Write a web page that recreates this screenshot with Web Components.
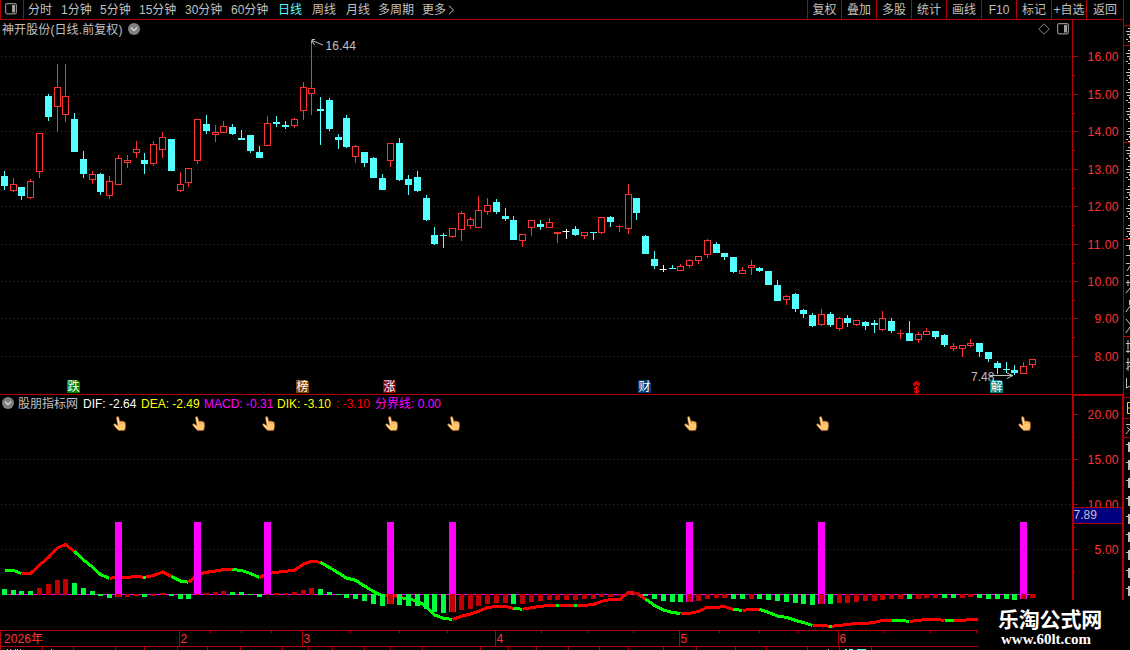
<!DOCTYPE html>
<html lang="zh-CN">
<head>
<meta charset="utf-8">
<title>神开股份 日线</title>
<style>
html,body{margin:0;background:#000;overflow:hidden}
body{width:1130px;height:650px;font:12px/16px "Liberation Sans","Noto Sans CJK SC",sans-serif;color:#c0c0c0}
</style>
</head>
<body>
<stock-terminal></stock-terminal>
<script>
const LINE = '#b40000', RED = '#ff3232', CYAN = '#54ffff';

class Base extends HTMLElement {
  constructor() {
    super();
    this.attachShadow({ mode: 'open' });
  }
  connectedCallback() { this.shadowRoot.innerHTML = this.render(); }
}

const rect = (x, y, w, h, c) => `<rect x="${x}" y="${y}" width="${w}" height="${h}" fill="${c}"/>`;
const label = (x, y, t, c, len, extra = '') =>
  `<text x="${x}" y="${y}" fill="${c}"${len ? ` textLength="${len}"` : ''} ${extra}>${t}</text>`;

/* left, kind (r rising, c falling, w flat), high, body top, body bottom, low */
const CANDLES = `1c171,176,186,190 10r178,184,191,192 18c187,187,196,200 27r179,181,198,199 36r133,133,172,178
45c94,96,117,121 54r64,87,107,132 62r64,96,115,122 71c113,119,152,152 80c151,159,174,178 89r171,174,180,184
97c173,174,192,195 106r176,181,196,199 115r155,158,185,185 124r155,160,163,168 133r141,149,153,158
141c153,160,164,174 150r141,144,164,166 159r132,137,150,158 168c139,139,171,171 177r172,184,191,192
185r168,168,183,187 194r119,119,161,164 203c115,124,131,134 212r125,132,135,142 220r121,126,133,133
229c124,127,134,135 238c130,138,140,140 247c135,135,151,153 256c146,152,158,158 264r116,123,146,146
273c116,122,124,127 282c121,125,127,129 291r118,119,126,128 300r82,87,111,120 308r42,88,94,115
317c97,109,111,145 326c98,100,129,131 335c134,137,140,149 343c115,118,147,148 352r145,146,157,163
361c152,152,163,167 370c157,158,178,178 379c174,178,190,190 387r143,143,161,167 396c138,143,180,181
405c175,179,185,195 414c171,177,191,192 423c195,198,220,221 431c227,235,244,245 440c233,235,236,248
449r228,228,237,238 458r211,213,230,241 467r217,219,226,229 475r196,210,228,228 484r198,205,212,215
493c199,202,212,214 502c208,216,219,221 510c216,220,240,240 519r234,234,241,247 528r220,220,228,236
537c220,224,227,230 546r218,222,228,228 554r232,232,234,243 563w229,231,232,239 572c226,229,235,236
581r232,232,236,239 590c232,232,233,240 598r217,217,233,234 607c216,217,222,227 616r225,226,227,232
625r184,194,229,234 633c198,198,213,220 642c235,236,254,254 651c251,259,266,269 660w265,269,270,272
669c265,268,269,269 677r264,266,271,271 686r259,260,266,268 695r256,256,261,264 704r239,240,255,258
713c242,244,253,253 721c253,253,257,260 730c257,257,272,273 739r267,270,274,274 748r260,265,268,275
756c267,268,271,272 765c271,271,285,285 774c280,285,301,301 783r295,296,300,305 792c293,294,309,312
800c309,310,314,318 809c313,315,326,327 818r309,314,325,326 827c312,314,325,327 836r317,318,329,331
844c315,318,323,327 853r320,320,325,326 862c321,322,326,330 871c320,323,325,333 879r311,318,330,331
888c318,321,331,333 897r330,333,334,339 906c321,333,341,341 915r332,334,340,343 923r328,331,335,335
932c331,331,337,339 941c334,335,345,347 950r343,346,349,351 959r345,345,349,357 967r339,343,346,347
976c343,343,352,357 985c352,352,359,362 994c361,363,368,374 1003c362,369,370,373 1011c365,370,373,375
1020r362,366,374,374 1029r359,359,365,368`.split(/\s+/).map(s => {
  const m = s.match(/^(\d+)([rcw])(.*)$/);
  const [h, t, b, l] = m[3].split(',').map(Number);
  return { x: +m[1], k: m[2], h, t, b, l };
});

/* far edge of each histogram bar */
const HIST = `g589 g590 g591 g591 r588 r584 r580 r579 g583 g588 g591 g596 g598 r597 r597 r596 g597 r596 r593 g596
g599 g599 r595 r593 r592 r591 g592 g592 g595 g597 r595 r593 r593 r592 r590 r588 g589 g592 g595 g598
g599 g601 g604 g606 r604 g605 g606 g606 g609 g612 g613 r612 r610 r609 r606 r604 r603 r603 g604 r604
r602 r601 r600 r600 r600 r600 r599 r599 r597 r597 r596 r593 r592 g596 g599 g601 g602 g602 r602 r601
r599 r598 r598 g599 g599 r599 g599 g600 g601 g602 g603 g604 g605 r604 g604 r603 r603 r602 r601 r601
r600 r599 r599 g599 r599 r598 r598 g598 g598 r598 r597 g598 g599 g599 g599 g600 r599 r598`.split(/\s+/);

const DIF = [570.5,570.5,573.5,573.5,565,557.5,548,544.5,551.5,560,567,574.5,578.3,577.3,577.3,576.5,577.3,575.5,572,576.3,
581,582.3,574.5,572.3,571,569.5,569.5,570.5,573.5,577.5,573.7,572.3,571.3,570.3,564,561.3,562.3,567.5,573,578,
580.3,586,591.5,596,594.5,597,599.5,600.5,607,615,618.3,619.4,616.3,614,611.3,607.7,606.4,606.4,608.3,609.3,
607.7,606.4,605.4,605.4,605.4,605.4,605.4,604.4,601.4,599.4,599.4,592.6,593.2,599,605.5,610,612.6,613.4,613.4,611.4,
607.4,607.4,606.6,609.4,610.4,609.4,609.4,612.4,616,617.4,620.4,622.6,625.4,625.4,626.4,625.4,624.4,623.4,623.4,622.4,
620.4,620.4,620.4,621.4,620.4,619.4,619.4,620.4,620.4,620.4,619.4,619.4];
/* index ranges drawn in green on the DIF curve */
const FALLS = [[0,2],[8,12],[15.8,16.2],[19,21],[26,29],[36,43],[45.3,51],[58,59],[62.8,63.2],[64.8,65.2],
  [73,77],[83,84],[86,92],[93.8,94.2],[101,103],[107,108]];
const SIGNALS = [115,194,264,387,449,686,818,1020];

const grid = ys => ys.map(y =>
  `<path d="M1 ${y + .5}H1070" stroke="#b00000" stroke-dasharray="1 3" fill="none"/>`).join('');

function pointAt(i) {
  const a = Math.floor(i), f = i - a, b = Math.min(a + 1, DIF.length - 1);
  return [(CANDLES[a].x + (CANDLES[b].x - CANDLES[a].x) * f + 3.5).toFixed(1), (DIF[a] + (DIF[b] - DIF[a]) * f).toFixed(1)];
}
function curve(from, to, color) {
  const ids = [from];
  for (let i = Math.floor(from) + 1; i < to; i++) ids.push(i);
  ids.push(to);
  return `<polyline points="${ids.map(i => pointAt(i).join()).join(' ')}" fill="none" stroke="${color}" stroke-width="3" stroke-linejoin="round" shape-rendering="crispEdges"/>`;
}

customElements.define('panel-icon', class extends Base {
  render() {
    return `<style>:host{display:block;width:12px;height:12px}svg{display:block}</style>
    <svg width="12" height="12"><rect x=".6" y=".6" width="10.8" height="10.2" rx="1.5" fill="none" stroke="#8c8c8c" stroke-width="1.2"/>
    <rect x="7" y="2" width="3" height="7.5" fill="#a0a0a0"/></svg>`;
  }
});

customElements.define('drop-icon', class extends Base {
  render() {
    return `<style>:host{display:block;width:12px;height:12px}svg{display:block}</style>
    <svg width="12" height="12"><circle cx="6" cy="6" r="6" fill="#808080"/>
    <path d="M3 4.6 6 7.6 9 4.6" fill="none" stroke="#e0e0e0" stroke-width="1.3"/></svg>`;
  }
});

customElements.define('tool-tab', class extends Base {
  render() {
    return `<style>:host{display:block;box-sizing:border-box;height:19px;line-height:18px;padding-top:1px;white-space:nowrap;width:${this.getAttribute('w')}px}
    :host([active]){color:${CYAN}}
    :host([boxed]){border-left:1px solid ${LINE};text-align:center}
    svg{vertical-align:-1px;margin-left:2px}</style><slot></slot>${this.hasAttribute('more') ?
    '<svg width="7" height="10"><path d="M1 .8 5.5 5 1 9.2" fill="none" stroke="#c0c0c0"/></svg>' : ''}`;
  }
});

customElements.define('top-toolbar', class extends Base {
  render() {
    const left = [['分时',33],['1分钟',39],['5分钟',39],['15分钟',46],['30分钟',46],['60分钟',47],['日线',34],['周线',34],['月线',32],['多周期',44],['更多',40]];
    const right = [['复权',34],['叠加',35],['多股',35],['统计',35],['画线',35],['F10',35],['标记',35],['+自选',35],['返回',37]];
    return `<style>:host{display:flex;box-sizing:border-box;height:20px;border-bottom:1px solid ${LINE}}
    .toggle{box-sizing:border-box;width:24px;height:19px;padding:3px 0 0 4px;border:solid ${LINE};border-width:0 1px}
    .tabs{display:flex;padding-left:4px;flex:1}.tools{display:flex;border-right:1px solid ${LINE}}</style>
    <div class="toggle"><panel-icon></panel-icon></div>
    <div class="tabs">${left.map(([t, w]) => `<tool-tab w="${w}"${t === '日线' ? ' active' : ''}${t === '更多' ? ' more' : ''}>${t}</tool-tab>`).join('')}</div>
    <div class="tools">${right.map(([t, w]) => `<tool-tab boxed w="${w}">${t}</tool-tab>`).join('')}</div>`;
  }
});

customElements.define('value-axis', class extends Base {
  render() {
    const lower = this.hasAttribute('lower');
    const ys = lower ? [414,459,504,549] : [56,94,131,169,206,244,281,318,356];
    const first = lower ? 20 : 16, step = lower ? 5 : 1;
    const top = lower ? 395 : 20, h = lower ? 235 : 375;
    let s = lower
      ? rect(1072,395,2,235,LINE) + rect(1122,395,2,235,LINE) + rect(1072,395,52,1,LINE)
      : rect(1072,20,1,375,LINE) + rect(1123,20,1,375,LINE) + rect(1072,394,52,1,LINE);
    ys.forEach((y, i) => {
      s += rect(1073, y, 5, 1, LINE);
      const n = ys[i + 1];
      if (n || lower) s += rect(1073, n ? Math.round((y + n) / 2) : 572, 2, 1, LINE);
      const t = (first - i * step).toFixed(2);
      s += label(1118.5, y + 5, t, RED, t.length > 4 ? 31 : 24, 'text-anchor="end"');
    });
    if (lower) s += rect(1074,507,48,17,LINE) + rect(1074,508,48,15,'#000080') + label(1073.5,519,'7.89','#c0c0c0',23.5);
    return `<style>:host{display:block;width:52px}svg{display:block}text{font:12px "Liberation Sans",sans-serif}</style>
    <svg width="52" height="${h}" viewBox="1072 ${top} 52 ${h}">${s}</svg>`;
  }
});

customElements.define('price-pane', class extends Base {
  render() {
    let s = grid([56,94,131,169,206,244,281,318,356]);
    for (const c of CANDLES) {
      const col = { r: RED, c: CYAN, w: '#fff' }[c.k];
      if (c.k === 'r') {
        s += rect(c.x + 3, c.h, 1, c.t - c.h, col) + rect(c.x + 3, c.b, 1, c.l - c.b, col);
        s += c.b - c.t > 2
          ? `<rect x="${c.x + .5}" y="${c.t + .5}" width="6" height="${c.b - c.t - 1}" fill="#000" stroke="${col}"/>`
          : rect(c.x, c.t, 7, c.b - c.t, col);
        if (c.x === 897 || c.x === 616) s += rect(c.x + 3, c.h, 1, c.l - c.h, col);
      } else s += rect(c.x + 3, c.h, 1, c.l - c.h, col) + rect(c.x - (c.k === 'w' ? .5 : 0), c.t, 7, c.b - c.t, col);
    }
    s += `<g fill="none" stroke="#c0c0c0"><path d="M315 39.5H312L311.5 43M312 40.5 323 45M312 41 314.5 45"/><path d="M990 375.5H1013M1007 373 1013 375.5 1007 378.5"/></g>`;
    s += label(325.5, 50, '16.44', '#c0c0c0', 30.5) + label(971, 381, '7.48', '#c0c0c0', 23.5);
    for (const [x, t, c] of [[67,'跌','#008000'],[296,'榜','#804000'],[383,'涨','#800000'],[638,'财','#003c78'],[990,'解','#008080']])
      s += `<path d="M${x} 380h11l2 2v11h-13z" fill="${c}"/>` + label(x + .5, 391, t, '#fff', 12, 'font-weight="500"');
    s += `<path d="M913 384.5 916.5 381.5 920 384.5M913.5 386 916.5 383.5 919.5 386" fill="none" stroke="#f00" stroke-width="1.2"/>`
      + label(913, 393, 'S', '#f00', 7, 'style="font-size:9.5px;font-weight:bold"') + rect(916,386,1,8,'#f00');
    s += rect(0, 394, 1072, 1, LINE);
    return `<style>:host{display:grid;grid-template-columns:1072px 52px;height:375px}
    header{display:flex;align-items:center;gap:5px;height:18px;padding:0 3px 0 2px}
    .name{padding-top:2px;letter-spacing:.1px}
    .grow{flex:1}svg{display:block}text{font:12px "Liberation Sans","Noto Sans CJK SC",sans-serif}
    .dia{margin-right:2px}</style>
    <section><header><span class="name">神开股份(日线.前复权)</span><drop-icon></drop-icon><span class="grow"></span>
    <svg class="dia" width="12" height="12"><path d="M6 .8 11.2 6 6 11.2 .8 6z" fill="none" stroke="#808080"/></svg><panel-icon></panel-icon></header>
    <svg width="1072" height="357" viewBox="0 38 1072 357">${s}</svg></section><value-axis></value-axis>`;
  }
});

customElements.define('indicator-pane', class extends Base {
  render() {
    let s = grid([459,504,549]) + rect(2, 594, 1030, 1, '#ff00ff');
    let fallAt = 0, cuts = '';
    for (const [a, b] of FALLS) { if (a > fallAt) cuts += curve(fallAt, a, '#f00'); cuts += curve(a, b, '#0f0'); fallAt = b; }
    s += cuts + curve(fallAt, DIF.length - 1, '#f00');
    CANDLES.forEach((c, i) => {
      const y = +HIST[i].slice(1), sig = SIGNALS.includes(c.x);
      if (sig) s += rect(c.x, 522, 7, Math.max(y, 595) - 522, '#f0f');
      s += rect(c.x + 1, Math.min(y, 594), 5, y < 594 ? 595 - y : y - 594, HIST[i][0] === 'g' ? '#00ff40' : '#c00000');
    });
    for (const x of SIGNALS) s += `<use href="#hand" x="${x - 2}" y="416"/>`;
    const vals = [['股朋指标网','#c0c0c0',65],['DIF: -2.64','#fff',58],['DEA: -2.49','#ff0',63],['MACD: -0.31','#f0f',73],['DIK: -3.10','#ff0',59],[': -3.10','#f00',39],['分界线: 0.00','#f0f',80]];
    return `<style>:host{display:grid;grid-template-columns:1072px 52px;height:235px}
    header{display:flex;align-items:center;height:16px;padding-left:2px}drop-icon{margin-right:4px}
    span{white-space:pre;padding-top:1px}svg{display:block}</style>
    <section><header><drop-icon></drop-icon>${vals.map(([t, c, w]) => `<span style="color:${c};width:${w}px">${t}</span>`).join('')}</header>
    <svg width="1072" height="219" viewBox="0 411 1072 219"><defs><g id="hand">
    <path d="M4.2 .6C5 .3 5.7.8 5.9 1.6L6.9 5.2 9 5.1 11 5.6 12.4 6.6 12.7 10.5 11.7 14.5 5.8 14.7 3.2 12.3.8 9.3C.2 8.2 1.3 7.5 2.2 7.9L4.7 9.4 3.5 2C3.3 1.2 3.6.8 4.2.6z" fill="#ffc870" stroke="#8a4818" stroke-width=".7"/>
    <path d="M4.4 1.5 5.6 7.8M1.5 8.6 4.5 11" stroke="#ffe8c0" stroke-width=".9" fill="none"/><path d="M7 5.5V8M9 5.5V8M11 6V8" stroke="#d88c38" stroke-width=".5"/></g></defs>${s}</svg></section>
    <value-axis lower></value-axis>`;
  }
});

customElements.define('time-axis', class extends Base {
  render() {
    let s = rect(0,630,1124,1,LINE) + rect(0,646,1124,1,LINE) + rect(0,630,1,20,LINE);
    for (const x of [179,302,495,679,838]) s += rect(x,630,1,16,LINE);
    for (const x of [210,241,271,350,399,447,541,587,633,719,759,798,884,930,976]) s += rect(x,631,1,2,LINE);
    for (const x of [42,73,115,144,177,207,240,282,308,332,364,390,422,480,508,536,568,599,628,663,696,735,766,807,839,871]) s += rect(x,647,1,3,LINE);
    for (const x of [7,10,15,17,20,51,828]) s += rect(x,649,1,1,'#c0c0c0');
    s += rect(845,649,2,1,CYAN) + rect(849,649,4,1,CYAN) + rect(857,649,9,1,CYAN);
    s += label(4,643,'2026年',RED,39);
    [[180.5,2],[303.5,3],[496.5,4],[680.5,5],[839.5,6]].forEach(([x, t]) => s += label(x, 643, t, RED));
    return `<style>:host{display:block;height:20px}svg{display:block}text{font:12px "Liberation Sans","Noto Sans CJK SC",sans-serif}</style>
    <svg width="1124" height="20" viewBox="0 630 1124 20">${s}</svg>`;
  }
});

/* the quote panel, of which only the first pixels fit in the window */
customElements.define('quote-edge', class extends Base {
  render() {
    let s = '';
    for (const y of [25,45,142,239,336,397,418,437]) s += rect(0, y, 6, 1, LINE);
    for (let y = 28; y < 236; y += y === 28 ? 22 : 19.4) {
      const r = Math.round(y);
      s += rect(4,r,2,1,'#c0c0c0') + rect(2,r+3,4,1,'#c0c0c0') + rect(3,r+6,3,1,'#c0c0c0') + rect(5,r+8,1,2,'#c0c0c0') + rect(2,r+11,2,1,'#c0c0c0') + rect(4,r+13,2,1,'#c0c0c0');
    }
    s += `<g fill="none" stroke="#c0c0c0"><path d="M2 245.5H6M5.5 245V250M2 255.5H6M2 263.5H6M3 271 6 266M2 275.5H5M4 280V286M2 282.5H6M2 293 6 288M5.5 300V305M2 312 6 306M2 319 6 324M2 333 6 327M2 343.5H6M4 340V353M2 351.5H6M2 362.5H6M4 358V371M2 369 6 366M2.5 378V388L6 386M2 424.5H6M3 427 6 430M2 434 6 429"/></g>`;
    s += `<path d="M6 402.5H3.5V413.5H6M3 408H6" fill="none" stroke="#e0e000"/>`;
    for (let y = 442; y < 600; y += 18) s += rect(2,y+2,2,1,'#c0c0c0') + rect(4,y,2,10,'#c0c0c0');
    return `<style>:host{display:block}svg{display:block}</style><svg width="6" height="650">${s}</svg>`;
  }
});

customElements.define('site-mark', class extends Base {
  render() {
    return `<style>:host{position:absolute;left:978px;top:600px;width:152px;height:50px;background:#000;color:#fff;box-sizing:border-box;padding:5px 0 0 20px}
    b{display:block;white-space:nowrap}
    .cn{font:bold 21px/27px "Noto Sans CJK SC",sans-serif;letter-spacing:-.2px}
    .url{font:bold 15px/14px "Liberation Serif",serif;padding-left:3px}</style>
    <b class="cn">乐淘公式网</b><b class="url">www.60lt.com</b>`;
  }
});

customElements.define('stock-terminal', class extends Base {
  render() {
    return `<style>:host{display:grid;grid-template-columns:1124px 6px;width:1130px;height:650px;position:relative;overflow:hidden;background:#000}</style>
    <main><top-toolbar></top-toolbar><price-pane></price-pane><indicator-pane></indicator-pane><time-axis></time-axis></main>
    <quote-edge></quote-edge><site-mark></site-mark>`;
  }
});
</script>
</body>
</html>
